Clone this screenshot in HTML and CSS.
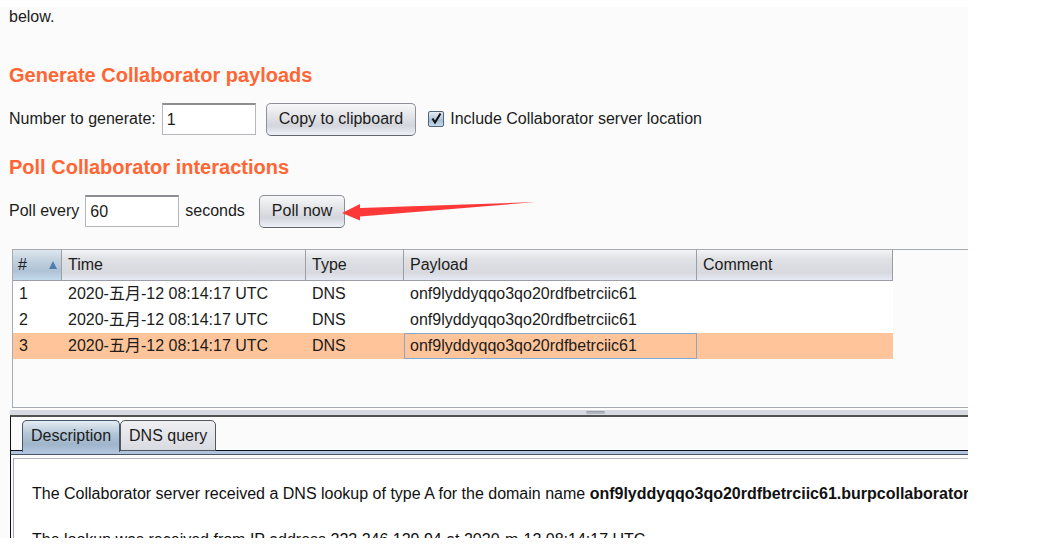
FILE: index.html
```html
<!DOCTYPE html>
<html lang="en">
<head>
<meta charset="utf-8">
<title>Collaborator client</title>
<link rel="stylesheet" href="styles.css">
</head>
<body>
<main class="client">
  <p class="intro">below.</p>

  <section class="section">
    <h2 class="heading">Generate Collaborator payloads</h2>
    <div class="controls">
      <label for="count">Number to generate:</label>
      <input class="field" id="count" type="text" value="1">
      <button class="button" type="button">Copy to clipboard</button>
      <label class="check"><input class="check-box" type="checkbox" checked>Include Collaborator server location</label>
    </div>
  </section>

  <section class="section">
    <h2 class="heading">Poll Collaborator interactions</h2>
    <div class="controls">
      <label for="interval">Poll every</label>
      <input class="field" id="interval" type="text" value="60">
      <span>seconds</span>
      <div class="poll">
        <button class="button" type="button">Poll now</button>
        <svg class="arrow" width="196" height="20" viewBox="0 0 196 20" aria-hidden="true"><path d="M0 12 L18 3 V7 L194 1 L18 15.500 V19.500 Z" fill="#fd3838"/></svg>
      </div>
    </div>
  </section>

  <div class="results">
    <table class="table">
      <colgroup><col class="col-id"><col class="col-time"><col class="col-type"><col class="col-payload"><col class="col-comment"></colgroup>
      <thead>
        <tr><th class="sorted"><span class="sort">#<svg width="8" height="8" viewBox="0 0 8 8" aria-hidden="true"><path d="M4 0 L8 8 H0 Z" fill="#4f7eae"/></svg></span></th><th>Time</th><th>Type</th><th>Payload</th><th>Comment</th></tr>
      </thead>
      <tbody>
        <tr><td>1</td><td>2020-五月-12 08:14:17 UTC</td><td>DNS</td><td>onf9lyddyqqo3qo20rdfbetrciic61</td><td></td></tr>
        <tr><td>2</td><td>2020-五月-12 08:14:17 UTC</td><td>DNS</td><td>onf9lyddyqqo3qo20rdfbetrciic61</td><td></td></tr>
        <tr class="selected"><td>3</td><td>2020-五月-12 08:14:17 UTC</td><td>DNS</td><td class="focused">onf9lyddyqqo3qo20rdfbetrciic61</td><td></td></tr>
      </tbody>
    </table>
  </div>

  <div class="divider"><span class="grip"></span></div>

  <section class="details">
    <div class="tabs" role="tablist">
      <button class="tab tab-active" type="button" role="tab" aria-selected="true">Description</button>
      <button class="tab" type="button" role="tab" aria-selected="false">DNS query</button>
    </div>
    <div class="message">
      <p>The Collaborator server received a DNS lookup of type A for the domain name <b>onf9lyddyqqo3qo20rdfbetrciic61.burpcollaborator.net</b>.</p>
      <p>The lookup was received from IP address 222.246.129.94 at 2020-m-12 08:14:17 UTC</p>
    </div>
  </section>
</main>
</body>
</html>
```

FILE: styles.css
```css
* {
  box-sizing: border-box;
}

body {
  margin: 0;
  height: 100vh;
  padding: 7px 83px 9px 0;
  background: #fff;
  color: #1c1c1c;
  font: 16px/20px "Liberation Sans", Arial, "Noto Sans CJK SC", sans-serif;
}

p,
h2 {
  margin: 0;
}

.client {
  display: flex;
  flex-direction: column;
  height: 100%;
  overflow: hidden;
  background: #fbfbfb;
}

.intro {
  padding: 0 9px;
}

.section {
  padding: 0 9px;
}

.intro + .section {
  margin-top: 36px;
}

.section + .section {
  margin-top: 20px;
}

.heading {
  color: #ff6633;
  font-size: 20px;
  line-height: 24px;
}

.controls {
  display: flex;
  align-items: center;
  gap: 6px;
  margin-top: 16px;
  height: 32px;
  white-space: nowrap;
}

.field {
  width: 94px;
  height: 32px;
  padding: 0 4px;
  border: 1px solid #b4b6ba;
  border-top: 2px solid #8c8e92;
  background: #fff;
  color: inherit;
  font: inherit;
}

.button {
  height: 33px;
  margin-left: 4px;
  padding: 0 12px;
  border: 1px solid #8d9096;
  border-bottom-color: #63666c;
  border-radius: 5px;
  background: linear-gradient(#f8f8fa, #e0e1e5 45%, #d4d6dd 70%, #eef0f8);
  color: inherit;
  font: inherit;
}

.check {
  display: flex;
  align-items: center;
  gap: 6px;
  margin-left: 6px;
}

.check-box {
  appearance: none;
  width: 16px;
  height: 16px;
  margin: 0;
  border: 1px solid #50647a;
  border-radius: 2px;
  background:
    url("data:image/svg+xml,%3Csvg xmlns='http://www.w3.org/2000/svg' viewBox='0 0 14 14'%3E%3Cpath d='M3.500 6.500L6 10.500L11.500 1.500' fill='none' stroke='%23101418' stroke-width='2'/%3E%3C/svg%3E"),
    linear-gradient(#e8eef4, #a9bfd3 60%, #c8daea);
}

.poll {
  position: relative;
  margin-left: 4px;
}

.arrow {
  position: absolute;
  left: 87px;
  top: 6px;
}

.results {
  flex: none;
  height: 159px;
  margin: 22px 0 0 12px;
  border: 1px solid #a6abb3;
  border-right: 0;
}

.table {
  width: 880px;
  table-layout: fixed;
  border-collapse: separate;
  border-spacing: 0;
  white-space: nowrap;
}

.col-id { width: 49px; }
.col-time { width: 244px; }
.col-type { width: 98px; }
.col-payload { width: 293px; }

.table th {
  height: 31px;
  padding: 0 6px;
  border-right: 1px solid #9b9ea5;
  border-bottom: 1px solid #9b9ea5;
  background: linear-gradient(#f5f5f7, #e0e1e5 30%, #d7d9df 75%, #e6eaf4);
  font-weight: normal;
  text-align: left;
}

.table .sorted {
  padding: 0 4px 0 5px;
  background: linear-gradient(#dce6ee, #bfcfdd 40%, #afc3d5 70%, #c4dbed);
}

.sort {
  display: flex;
  align-items: center;
  justify-content: space-between;
}

.table td {
  height: 26px;
  padding: 0 5px;
  border: 1px solid transparent;
  background: #fff;
}

.table .selected td {
  background: #ffc499;
}

.table .selected .focused {
  border-color: #85a9cc;
}

.divider {
  display: flex;
  flex: none;
  justify-content: center;
  height: 5px;
  margin: 2px 0 0 10px;
  padding: 1px 0;
  background: #d8dae1;
}

.grip {
  width: 19px;
  height: 3px;
  margin-left: 212px;
  border-top: 1px solid #969ba4;
  border-radius: 2px;
  background: #b4b8c0;
}

.details {
  flex: 1;
  min-height: 0;
  margin-left: 10px;
  border-top: 2px solid #50534f;
  border-left: 1px solid #111;
}

.tabs {
  display: flex;
  height: 39px;
  padding: 3px 11px 0;
  background:
    linear-gradient(#10131f, #10131f) 0 33px / 100% 1px no-repeat,
    linear-gradient(#b0c4de, #b0c4de) 0 34px / 100% 3px no-repeat,
    linear-gradient(#4b5567, #4b5567) 0 37px / 100% 1px no-repeat;
}

.tab {
  height: 31px;
  padding: 0 8px;
  border: 1px solid #53565c;
  border-radius: 5px 5px 0 0;
  background: linear-gradient(#f0f0f3, #d8dae0);
  color: inherit;
  font: inherit;
}

.tab-active {
  height: 32px;
  padding-bottom: 2px;
  border-color: #44566b;
  border-bottom: 0;
  background: linear-gradient(#e4edf4, #b5c7d7 40%, #a0b5ca 75%, #b0c4de);
}

.message {
  display: grid;
  gap: 26px;
  margin: 2px 0 0 2px;
  padding: 25px 18px;
  border-top: 1px solid #b3b5c0;
  border-left: 1px solid #a5a8b2;
  background: #fff;
  color: #111;
  white-space: nowrap;
}
```
